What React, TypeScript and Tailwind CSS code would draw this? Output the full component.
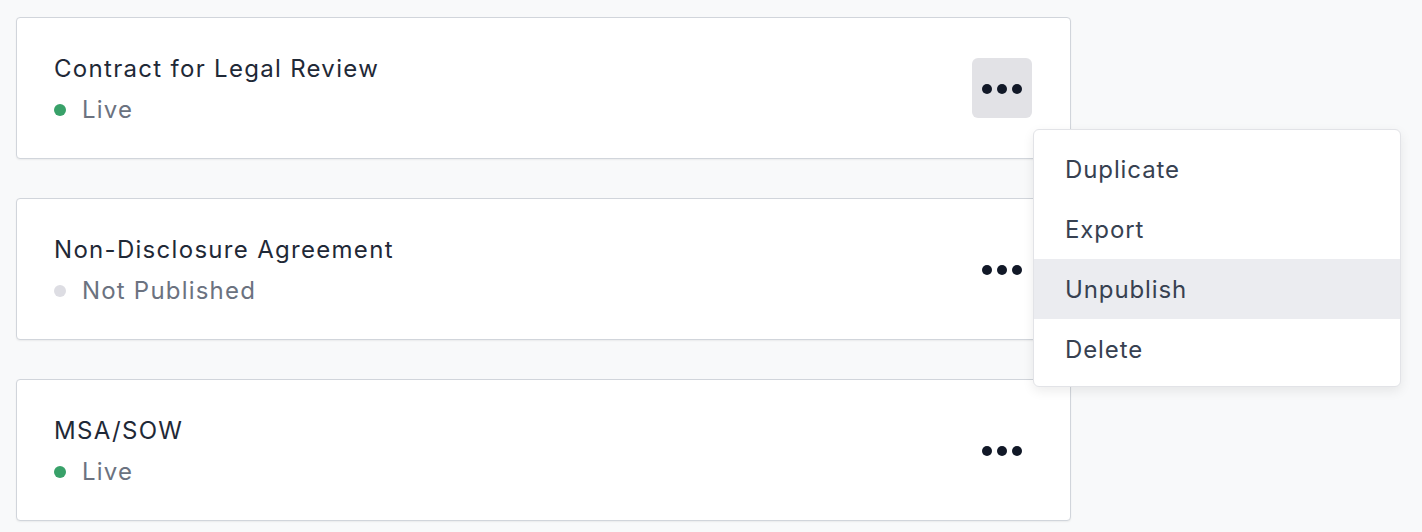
import React from "react";

function Dots() {
  return (
    <svg width="42" height="12" viewBox="0 0 42 12" className="block">
      <circle cx="6" cy="6" r="5" fill="#111827" />
      <circle cx="21" cy="6" r="5" fill="#111827" />
      <circle cx="36" cy="6" r="5" fill="#111827" />
    </svg>
  );
}

type Item = { title: string; live: boolean; active?: boolean };

const items: Item[] = [
  { title: "Contract for Legal Review", live: true, active: true },
  { title: "Non-Disclosure Agreement", live: false },
  { title: "MSA/SOW", live: true },
];

function Card({ item }: { item: Item }) {
  return (
    <div className="relative w-[1055px] h-[142px] bg-white border border-[#d1d5db] rounded-[4px] shadow-[0_1px_2px_rgba(0,0,0,0.06)] flex items-center justify-between pl-[37px] pr-[38px]">
      <div className="flex flex-col pt-[2px]">
        <div className="text-[24px] leading-[41px] tracking-[1.3px] text-[#1f2937]">{item.title}</div>
        <div className="flex items-center text-[24px] leading-[41px] tracking-[1.2px] text-[#6b7280]">
          <span
            className={
              item.live
                ? "w-[12px] h-[12px] rounded-full bg-[#38a169] mr-[16px]"
                : "w-[12px] h-[12px] rounded-full bg-[#dddde3] mr-[16px]"
            }
          />
          {item.live ? "Live" : "Not Published"}
        </div>
      </div>
      <div
        className={
          item.active
            ? "w-[60px] h-[60px] rounded-[6px] bg-[#e2e2e6] flex items-center justify-center pt-[2px] pr-[1px]"
            : "w-[60px] h-[60px] rounded-[6px] flex items-center justify-center pt-[2px] pr-[1px]"
        }
      >
        <Dots />
      </div>
    </div>
  );
}

export default function App() {
  return (
    <div
      className="relative w-[1422px] h-[532px] bg-[#f8f9fa] pt-[17px] pl-[16px] flex flex-col gap-[39px]"
      style={{ fontFamily: "Inter, 'Noto Sans', sans-serif" }}
    >
      {items.map((it) => (
        <Card key={it.title} item={it} />
      ))}
      <div className="absolute left-[1033px] top-[129px] w-[368px] bg-white border border-[#e2e3e7] rounded-[6px] shadow-[0_4px_12px_rgba(0,0,0,0.08)] pt-[9px] pb-[7px]">
        {["Duplicate", "Export", "Unpublish", "Delete"].map((t) => (
          <div
            key={t}
            className={
              t === "Unpublish"
                ? "h-[60px] flex items-center pl-[31px] pt-[2px] text-[24px] tracking-[0.9px] text-[#374151] bg-[#ebecf0]"
                : "h-[60px] flex items-center pl-[31px] pt-[2px] text-[24px] tracking-[0.9px] text-[#374151]"
            }
          >
            {t}
          </div>
        ))}
      </div>
    </div>
  );
}
